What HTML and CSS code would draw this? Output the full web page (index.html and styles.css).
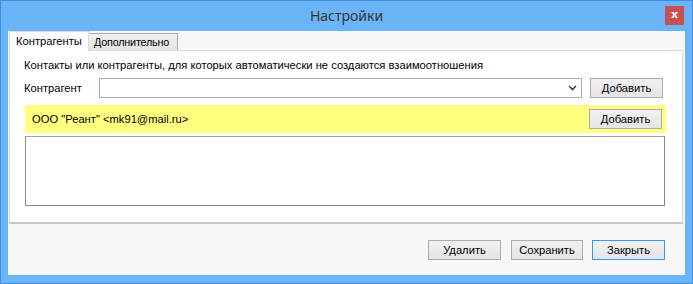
FILE: index.html
```html
<!DOCTYPE html>
<html lang="ru">
<head>
<meta charset="utf-8">
<title>Настройки</title>
<link rel="stylesheet" href="styles.css">
</head>
<body>
<div class="window">
  <div class="titlebar">
    <span class="title">Настройки</span>
    <div class="close">x</div>
  </div>
  <div class="client">
    <div class="tabs">
      <div class="tab tab-active">Контрагенты</div>
      <div class="tab">Дополнительно</div>
    </div>
    <div class="panel">
      <div class="desc">Контакты или контрагенты, для которых автоматически не создаются взаимоотношения</div>
      <div class="row">
        <span class="label">Контрагент</span>
        <div class="combo">
          <svg class="arrow" width="9" height="6" viewBox="0 0 9 6"><polyline points="1,1 4.5,4.5 8,1" fill="none" stroke="#444" stroke-width="1.6"/></svg>
        </div>
        <button class="btn">Добавить</button>
      </div>
      <div class="highlight">
        <span class="contact">ООО "Реант" &lt;mk91@mail.ru&gt;</span>
        <button class="btn">Добавить</button>
      </div>
      <div class="list"></div>
    </div>
    <div class="footer">
      <button class="btn">Удалить</button>
      <button class="btn btn-wide">Сохранить</button>
      <button class="btn btn-default">Закрыть</button>
    </div>
  </div>
</div>
</body>
</html>
```

FILE: styles.css
```css
* { box-sizing: border-box; }
html, body { margin: 0; padding: 0; }
body {
  width: 693px;
  height: 284px;
  overflow: hidden;
  font-family: "Liberation Sans", Arial, sans-serif;
  font-size: 11.2px;
  color: #000;
}
.window {
  width: 693px;
  height: 284px;
  border: 1px solid #3f8fe0;
  background: #6bb4f8;
  display: flex;
  flex-direction: column;
}
.titlebar {
  height: 30px;
  display: grid;
  grid-template-columns: 1fr auto 1fr;
  flex: none;
}
.title {
  grid-column: 2;
  font-family: "Noto Sans", "Open Sans", sans-serif;
  font-size: 14px;
  color: #333;
  line-height: 28px;
  padding-top: 1px;
}
.close {
  grid-column: 3;
  justify-self: end;
  margin-top: 5px;
  margin-right: 8px;
  width: 19px;
  height: 19px;
  background: #c75050;
  color: #fff;
  font-family: "DejaVu Sans", sans-serif;
  font-weight: bold;
  font-size: 11px;
  line-height: 17px;
  text-align: center;
}
.client {
  margin: 0 7px;
  height: 244px;
  background: #f7f7f7;
  display: flex;
  flex-direction: column;
  padding: 0 2px 0 1px;
}
.tabs {
  display: flex;
  align-items: flex-end;
  height: 19px;
  flex: none;
  position: relative;
  z-index: 1;
}
.tab {
  height: 17px;
  width: 89px;
  border: 1px solid #acacac;
  border-bottom: none;
  border-left: none;
  background: linear-gradient(#f0f0f0, #e5e5e5);
  padding-left: 5px;
  font-size: 10.8px;
  letter-spacing: -0.2px;
  line-height: 16px;
  white-space: nowrap;
}
.tab-active {
  width: 80px;
  height: 20px;
  margin-bottom: -1px;
  border: 1px solid #d9d9d9;
  border-bottom: none;
  background: #fff;
  padding-left: 6px;
  font-size: 11.2px;
  letter-spacing: 0;
  line-height: 18px;
}
.panel {
  height: 174px;
  background: #fff;
  border: 1px solid #d9d9d9;
  border-bottom: 2px solid #c8c8c8;
  padding: 0 16px 0 14px;
  display: flex;
  flex-direction: column;
}
.desc {
  margin-top: 8px;
  line-height: 13px;
  white-space: nowrap;
}
.row {
  margin-top: 6px;
  display: flex;
  align-items: center;
  height: 20px;
  padding-right: 3px;
}
.label { width: 75px; }
.combo {
  width: 483px;
  height: 20px;
  border: 1px solid #acacac;
  background: #fff;
  display: flex;
  justify-content: flex-end;
  align-items: center;
  padding-right: 4px;
  margin-right: 8px;
}
.btn {
  font-family: "Liberation Sans", Arial, sans-serif;
  font-size: 11.2px;
  color: #000;
  width: 73px;
  height: 20px;
  border: 1px solid #acacac;
  background: linear-gradient(#f0f0f0, #e5e5e5);
  padding: 0;
  margin: 0;
  line-height: 18px;
}
.highlight {
  margin-top: 7px;
  margin-left: 1px;
  height: 28px;
  background: #ffff80;
  display: flex;
  align-items: center;
  justify-content: space-between;
  padding: 0 4px 0 7px;
}
.list {
  margin-top: 3px;
  margin-left: 1px;
  margin-right: 1px;
  height: 70px;
  border: 1px solid #828790;
  border-top-color: #a0a0a0;
  background: #fff;
}
.footer {
  display: flex;
  justify-content: flex-end;
  gap: 9px;
  padding-top: 16px;
  padding-right: 18px;
}
.btn-wide { width: 72px; margin-left: 1px; }
.btn-default { border-color: #3399ff; }
```
